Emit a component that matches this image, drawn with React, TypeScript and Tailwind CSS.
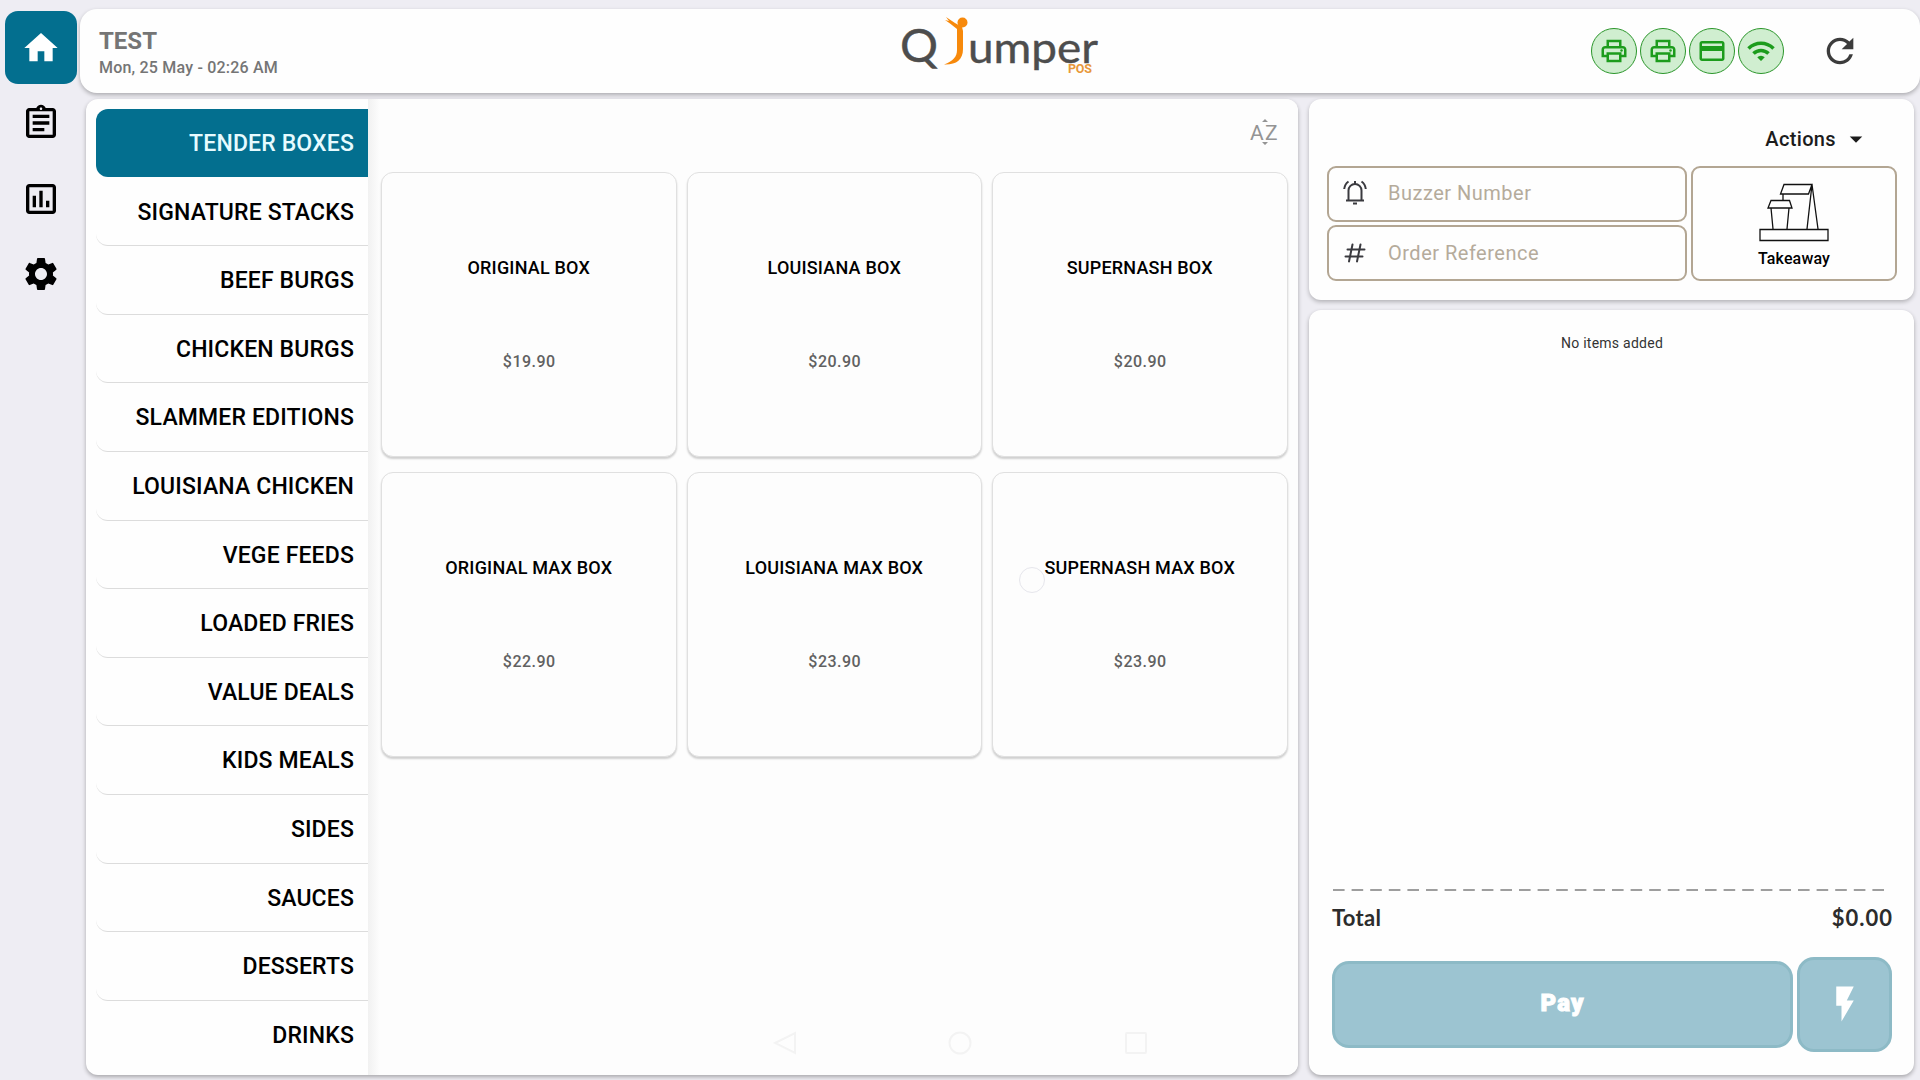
import {
  MdHome,
  MdOutlineAssignment,
  MdOutlineAssessment,
  MdSettings,
  MdOutlinePrint,
  MdOutlineCreditCard,
  MdWifi,
  MdRefresh,
  MdArrowDropDown,
  MdFlashOn,
} from 'react-icons/md';

const CATEGORIES = [
  'TENDER BOXES',
  'SIGNATURE STACKS',
  'BEEF BURGS',
  'CHICKEN BURGS',
  'SLAMMER EDITIONS',
  'LOUISIANA CHICKEN',
  'VEGE FEEDS',
  'LOADED FRIES',
  'VALUE DEALS',
  'KIDS MEALS',
  'SIDES',
  'SAUCES',
  'DESSERTS',
  'DRINKS',
];

const PRODUCTS = [
  { name: 'ORIGINAL BOX', price: 19.9 },
  { name: 'LOUISIANA BOX', price: 20.9 },
  { name: 'SUPERNASH BOX', price: 20.9 },
  { name: 'ORIGINAL MAX BOX', price: 22.9 },
  { name: 'LOUISIANA MAX BOX', price: 23.9 },
  { name: 'SUPERNASH MAX BOX', price: 23.9 },
];

const STATUS_ICONS = [MdOutlinePrint, MdOutlinePrint, MdOutlineCreditCard, MdWifi];

const Logo = () => (
  <svg width="200" height="70" viewBox="0 0 200 70" className="absolute left-[820px] top-0">
    <g fill="#4d4d4d" stroke="#4d4d4d" strokeWidth="0.4" fontFamily="Lato">
      <text x="0" y="53" fontSize="46" textLength="38" lengthAdjust="spacingAndGlyphs">Q</text>
      <text x="68" y="54" fontSize="43" textLength="130" lengthAdjust="spacingAndGlyphs">umper</text>
    </g>
    <circle cx="62.5" cy="13.5" r="5" fill="#f7890b" />
    <path d="M46 8 L55 14 L62 18 L63 22 L63 40 C63 51 56 56 44 55.5 C53 52 57 48 57 41 L57 20 L50 14.5 L45 11 L49 12 Z" fill="#f7890b" />
    <text x="168" y="64" fontSize="12.5" fill="#e8983a" fontFamily="Roboto" fontWeight="700" textLength="24">POS</text>
  </svg>
);

const BuzzerIcon = () => (
  <svg width="24" height="28" viewBox="0 0 24 28" fill="none" stroke="#3a3a3f" strokeWidth="2">
    <path d="M3 21.500h18M5.5 21.500V11.500a6.5 6.5 0 0 1 13 0v10M12 5V2M5.500 2.500Q1.800 5 1.200 10M18.500 2.500q3.700 2.500 4.300 7.500" />
    <path d="M10 24.500h4" />
  </svg>
);

const HashIcon = () => (
  <svg width="24" height="24" viewBox="0 0 24 24" fill="none" stroke="#3a3a3f" strokeWidth="2" strokeLinecap="round">
    <path d="M9.500 3.500L6 20.500M17.500 3.500L14 20.500M4.500 8.500H21.500M2.500 15.500H19.500" />
  </svg>
);

const TakeawayIcon = () => (
  <svg width="70" height="60" viewBox="0 0 70 60" fill="none" stroke="#111" strokeWidth="1.3">
    <path d="M1 46.500H69V57.500H1Z" />
    <path d="M25 1.500H53L49.500 11H21.500ZM53 1.500L48 46M53 1.500L59 46M24 11V17.500" />
    <path d="M12 17.500H30.500L33 25H9ZM12 25L14 46M30 25L28 46" />
  </svg>
);

const Sidebar = () => (
  <nav className="w-[80px] shrink-0 flex flex-col items-center pt-[11px] pl-[2px] text-black">
    <button className="w-[72px] h-[73px] mb-[19px] rounded-[13px] bg-[#036f8f] flex items-center justify-center">
      <MdHome size={40} className="text-white" />
    </button>
    <MdOutlineAssignment size={40} className="mb-[36px]" />
    <MdOutlineAssessment size={40} className="mb-[35px]" />
    <MdSettings size={40} />
  </nav>
);

const Header = () => (
  <header className="relative h-[84px] shrink-0 rounded-[17px] bg-[#fefefe] shadow-[0_2px_4px_rgba(0,0,0,0.28)] flex items-center pl-[19px] pr-[60px]">
    <div className="flex flex-col pt-[4px] text-[#757575]">
      <span className="text-[24px] leading-[28px] font-bold">TEST</span>
      <span className="text-[16px] leading-[25px] font-medium tracking-[0.2px]">Mon, 25 May - 02:26 AM</span>
    </div>
    <Logo />
    <div className="ml-auto flex items-center gap-[3px]">
      {STATUS_ICONS.map((Icon, i) => (
        <span key={i} className="w-[46px] h-[46px] rounded-full border border-[#2b962b] bg-[#d0eed0] flex items-center justify-center">
          <Icon size={30} className="text-[#1c9c1c]" />
        </span>
      ))}
    </div>
    <MdRefresh size={40} className="ml-[36px] text-[#3c3c3c]" />
  </header>
);

const Categories = () => (
  <div className="w-[282px] shrink-0 pl-[10px] pt-[10px]">
    {CATEGORIES.map((name, i) => (
      <div
        key={name}
        className={`flex items-center justify-end pr-[14px] rounded-l-[12px] text-[23px] font-medium tracking-[0.15px] ${
          i === 0
            ? 'h-[67.6px] mb-px pt-[2px] bg-[#036f8f] text-[#e6fbff]'
            : i === CATEGORIES.length - 1
              ? 'h-[68.6px] pt-[3px] text-black'
              : 'h-[68.6px] pt-[3px] text-black border-b border-[#dcdcdc]'
        }`}
      >
        {name}
      </div>
    ))}
  </div>
);

const ProductGrid = () => (
  <div className="relative flex-1 pl-[13px] pr-[10.5px] bg-linear-to-r from-[#f1f1f1] to-[#fdfdfd] to-[12px]">
    <div className="h-[73px] flex justify-end pt-[19px] pr-[8px]">
      <svg width="30" height="30" viewBox="0 0 30 30" fill="#949494">
        <text x="0" y="22" fontSize="21" fontFamily="Roboto">A</text>
        <text x="15" y="22" fontSize="21" fontFamily="Roboto">Z</text>
        <path d="M12 4l3-3 3 3zM12 24l3 3 3-3z" />
      </svg>
    </div>
    <div className="grid grid-cols-3 gap-x-[10px] gap-y-[15px]">
      {PRODUCTS.map((p) => (
        <div
          key={p.name}
          className="h-[285px] rounded-[12px] border border-[#e0e0e0] bg-[#fdfdfd] shadow-[0_2px_2px_rgba(0,0,0,0.18)] flex flex-col items-center pt-[83px]"
        >
          <span className="text-[18px] leading-[24px] font-medium tracking-[0.2px] text-black">{p.name}</span>
          <span className="mt-[70px] pl-px text-[16px] leading-[24px] font-medium tracking-[0.5px] text-[#616161]">${p.price.toFixed(2)}</span>
        </div>
      ))}
    </div>
    <div className="absolute left-[651px] top-[468px] w-[26px] h-[26px] rounded-full border border-[#e6e6ec] bg-[#fdfdfd]" />
    <svg width="380" height="26" viewBox="0 0 380 26" fill="none" stroke="#f3f3f3" strokeWidth="2" className="absolute left-[405px] bottom-[19px]">
      <path d="M2 13L22 3V23Z" />
      <circle cx="187" cy="13" r="10.500" />
      <rect x="353" y="3" width="20" height="20" rx="1" />
    </svg>
  </div>
);

const OrderDetails = () => (
  <section className="h-[201px] shrink-0 rounded-[12px] bg-[#fefefe] shadow-[0_2px_4px_rgba(0,0,0,0.25)] pl-[18px] pr-[17px] pt-[23px]">
    <div className="h-[44px] flex justify-end pr-[26px]">
      <div className="flex h-[34px] items-center gap-[5px]">
        <span className="text-[20px] font-medium tracking-[0.35px] text-[#1c1c1c]">Actions</span>
        <MdArrowDropDown size={30} className="text-[#1c1c1c]" />
      </div>
    </div>
    <div className="flex gap-[4px]">
      <div className="w-[360px] flex flex-col gap-[3px]">
        <div className="h-[56px] rounded-[9px] border-2 border-[#b3a693] flex items-center pb-[2px] pl-[14px] gap-[21px]">
          <BuzzerIcon />
          <span className="text-[20px] tracking-[0.5px] text-[#b5ab9b]">Buzzer Number</span>
        </div>
        <div className="h-[56px] rounded-[9px] border-2 border-[#b3a693] flex items-center pl-[14px] gap-[21px]">
          <HashIcon />
          <span className="text-[20px] tracking-[0.5px] text-[#b5ab9b]">Order Reference</span>
        </div>
      </div>
      <div className="w-[206px] rounded-[9px] border-2 border-[#b3a693] flex flex-col items-center pt-[15px]">
        <TakeawayIcon />
        <span className="mt-[4px] text-[16px] leading-[24px] font-medium tracking-[0.15px] text-black">Takeaway</span>
      </div>
    </div>
  </section>
);

const Cart = () => (
  <section className="flex-1 rounded-[12px] bg-[#fefefe] shadow-[0_2px_4px_rgba(0,0,0,0.3)] flex flex-col pl-[23px] pr-[22px]">
    <p className="mt-[22px] text-center text-[14px] leading-[22px] tracking-[0.25px] text-[#333]">No items added</p>
    <svg width="554" height="2" className="mt-auto">
      <line x1="1" x2="554" y1="1" y2="1" stroke="#9e9e9e" strokeWidth="2" strokeDasharray="11.6 7" />
    </svg>
    <div className="mt-[10px] mb-[2px] h-[32px] flex items-center justify-between font-[Lato] text-[22px] font-bold text-[#2c2c2c]">
      <span className="tracking-[0.3px]">Total</span>
      <span className="tracking-[1px] -mr-px">$0.00</span>
    </div>
    <div className="mt-[22px] mb-[23px] flex items-center gap-[4px]">
      <button className="w-[461px] h-[87px] pb-[3px] rounded-[17px] border-[3px] border-[#8dbac6] bg-[#9cc4d1] text-[24px] font-black tracking-[1.2px] text-white [-webkit-text-stroke:1px_white]">
        Pay
      </button>
      <button className="w-[95px] h-[95px] rounded-[17px] border-[3px] border-[#8dbac6] bg-[#9cc4d1] flex items-center justify-center pb-[2px]">
        <MdFlashOn size={42} className="text-white" />
      </button>
    </div>
  </section>
);

const App = () => (
  <div className="w-[1920px] h-[1080px] overflow-hidden flex bg-[#eeedf3] font-[Roboto,sans-serif]">
    <Sidebar />
    <div className="flex-1 min-w-0 flex flex-col pt-[9px]">
      <Header />
      <div className="flex-1 flex gap-[11px] pl-[6px] pr-[6px] pt-[6px] pb-[5px]">
        <main className="w-[1212px] shrink-0 overflow-hidden rounded-[12px] bg-[#fefefe] shadow-[0_2px_4px_rgba(0,0,0,0.3)] flex">
          <Categories />
          <ProductGrid />
        </main>
        <div className="flex-1 min-w-0 flex flex-col gap-[10px]">
          <OrderDetails />
          <Cart />
        </div>
      </div>
    </div>
  </div>
);

export default App;
